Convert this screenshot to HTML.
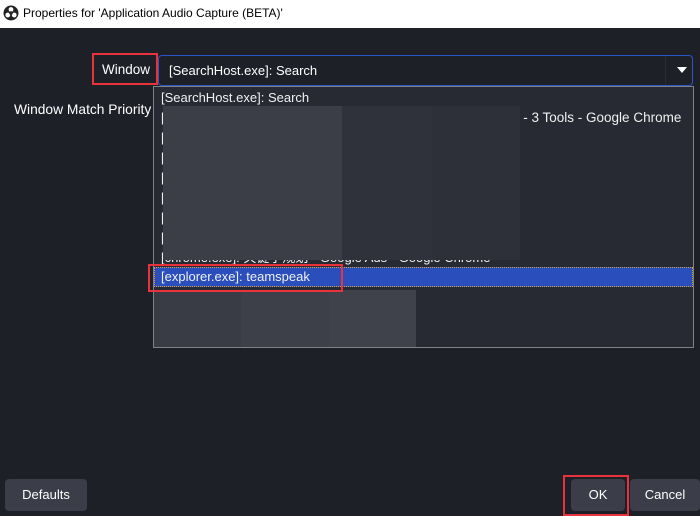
<!DOCTYPE html>
<html><head><meta charset="utf-8"><style>
body{margin:0;width:700px;height:515px;overflow:hidden;background:#1e2028;font-family:"Liberation Sans","Noto Sans CJK SC",sans-serif;position:relative;color:#fff}
.t{position:absolute;white-space:nowrap}
.title{position:absolute;left:0;top:0;width:700px;height:28px;background:#fff;color:#000;font-size:12px}
.combo{position:absolute;left:158px;top:55px;width:533px;height:29px;border:1.5px solid #2c55c8;border-radius:4px;background:#1e2028}
.list{position:absolute;left:153px;top:86px;width:539px;height:260px;border:1px solid #80828a;background:#272a33;font-size:13px;color:#f0f0f0;overflow:hidden}
.row{position:absolute;left:7px;height:20px;line-height:20px;white-space:nowrap}
.btn{position:absolute;top:479px;height:32px;background:#3b3e48;border-radius:4px;color:#fff;font-size:13px;text-align:center;line-height:32px}
.red{position:absolute;border:2px solid #e8323c}
.g{position:absolute}
</style></head><body>
<div class="title">
<svg style="position:absolute;left:3px;top:5px" width="16" height="16" viewBox="0 0 16 16"><circle cx="8" cy="8" r="7.5" fill="#222"/><circle cx="8" cy="4.5" r="2.4" fill="#fff"/><circle cx="4.8" cy="10" r="2.4" fill="#fff"/><circle cx="11.2" cy="10" r="2.4" fill="#fff"/><circle cx="8" cy="8" r="1.8" fill="#222"/></svg>
<span class="t" style="left:23px;top:6px">Properties for 'Application Audio Capture (BETA)'</span></div>
<span class="t" style="left:102px;top:62px;font-size:13.5px">Window</span>
<div class="red" style="left:92px;top:53px;width:62px;height:28px"></div>
<span class="t" style="left:14px;top:102px;font-size:13.8px">Window Match Priority</span>
<div class="combo"><span class="t" style="left:10px;top:7px;font-size:13px">[SearchHost.exe]: Search</span>
<div style="position:absolute;left:506px;top:0;width:1px;height:29px;background:#2a2c34"></div>
<div style="position:absolute;left:518px;top:11px;width:0;height:0;border-left:5px solid transparent;border-right:5px solid transparent;border-top:6px solid #fff"></div></div>
<div class="list">
<div class="row" style="top:1px">[SearchHost.exe]: Search</div>
<div class="row" style="top:21px">[</div>
<div class="row" style="top:21px;left:358px;font-size:13.5px">o - 3 Tools - Google Chrome</div>
<div class="row" style="top:41px">[</div><div class="row" style="top:61px">[</div><div class="row" style="top:81px">[</div><div class="row" style="top:101px">[</div><div class="row" style="top:121px">[</div><div class="row" style="top:141px">[</div>
<div class="row" style="top:161px">[chrome.exe]: 关键字规划 - Google Ads - Google Chrome</div>
<div style="position:absolute;left:0;top:180px;width:539px;height:20px;background:#2a4fbd;border:1px dotted #d9a030;box-sizing:border-box"></div>
<div class="row" style="top:180px">[explorer.exe]: teamspeak</div>
<div class="g" style="left:9px;top:19px;width:89px;height:154px;background:#3b3e47"></div>
<div class="g" style="left:98px;top:19px;width:90px;height:154px;background:#3b3e47"></div>
<div class="g" style="left:188px;top:19px;width:90px;height:154px;background:#30323b"></div>
<div class="g" style="left:278px;top:19px;width:88px;height:154px;background:#2d3039"></div>
<div class="g" style="left:0;top:203px;width:87px;height:57px;background:#393c44"></div>
<div class="g" style="left:87px;top:203px;width:88px;height:57px;background:#3d4048"></div>
<div class="g" style="left:175px;top:203px;width:87px;height:57px;background:#3f424a"></div>
</div>
<div class="red" style="left:148px;top:264px;width:191px;height:24px"></div>
<div class="btn" style="left:5px;width:82px">Defaults</div>
<div class="btn" style="left:571px;width:54px">OK</div>
<div class="red" style="left:563px;top:475px;width:62px;height:37px"></div>
<div class="btn" style="left:630px;width:70px">Cancel</div>
</body></html>
